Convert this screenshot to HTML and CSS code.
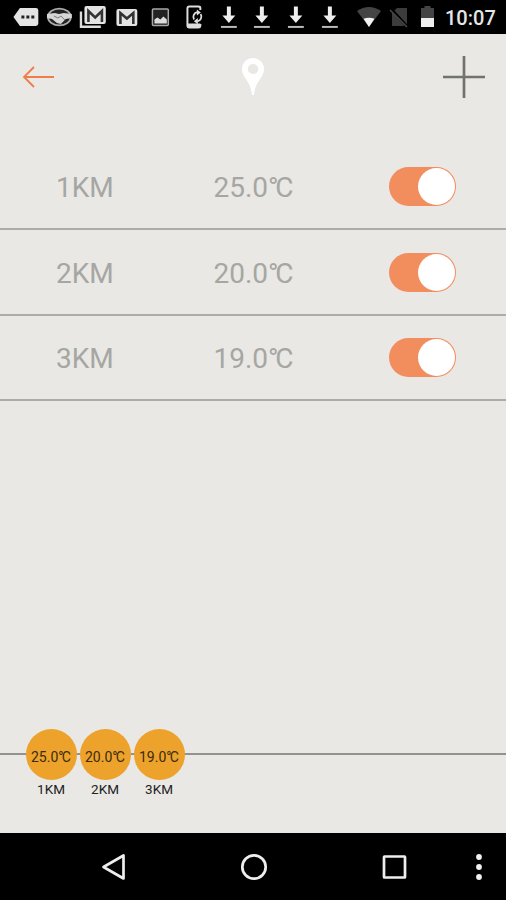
FILE: index.html
```
<!DOCTYPE html>
<html lang="en">
<head>
  <meta charset="UTF-8">
  <meta name="viewport" content="width=device-width, initial-scale=1.0">
  <title>Distance alerts</title>
  <link rel="stylesheet" href="styles.css">
</head>
<body>
  <!-- Status bar -->
  <div class="status-bar">
    <div class="notifications">
      <svg viewBox="0 0 34 34"><path d="M11 8h16q2.500 0 2.500 2.500v13q0 2.500-2.500 2.500H11L4.500 17z" fill="#e4e4e4"/><path d="M12.500 15.500h3v3h-3zM17.500 15.500h3v3h-3zM22.500 15.500h3v3h-3z" fill="#222"/></svg>
      <svg viewBox="0 0 34 34"><ellipse cx="16.500" cy="17" rx="11.500" ry="8.500" fill="#222" stroke="#aaa" stroke-width="1.800"/><path d="M4 14l8-1 4 1 5-1 8 1v4l-6 1-5 5-4-1-5-4-5-1z" fill="#d5d5d5"/><path d="M11 16l4 2 3-2 4 4" stroke="#777" fill="none"/></svg>
      <svg viewBox="0 0 34 34"><path d="M4 11.500v15.300h20" fill="none" stroke="#ddd" stroke-width="2.400"/><rect x="7.500" y="6" width="21.500" height="18" rx="2" fill="#e4e4e4"/><path d="M11.500 22V11l6.800 6.500 6.800-6.500v11" fill="none" stroke="#333" stroke-width="2.600"/></svg>
      <svg viewBox="0 0 34 34"><rect x="6.500" y="9" width="21" height="17" rx="2" fill="#e4e4e4"/><path d="M10.500 24V13l6.500 5.500 6.500-5.500v11" fill="none" stroke="#333" stroke-width="2.600"/></svg>
      <svg viewBox="0 0 34 34"><rect x="8.500" y="9" width="16" height="16.500" rx="1" fill="#222" stroke="#a8a8a8" stroke-width="1.500"/><path d="M10.500 23.500v-4l3-2 3 2 3-3 3.500 3v4z" fill="#ddd"/></svg>
      <svg viewBox="0 0 34 34"><path d="M22.500 10V8q0-1.500-2-1.500h-9q-2 0-2 2v17q0 2 2 2h9q2 0 2-2V24" fill="none" stroke="#ddd" stroke-width="2"/><path d="M9.500 23.500h13v3q0 1-1 1h-11q-1 0-1-1z" fill="#ddd"/><path d="M16.200 19.500a4.800 4.800 0 0 1 3.300-7.300M22.800 14a4.800 4.800 0 0 1-3.300 7.300" fill="none" stroke="#ddd" stroke-width="1.800"/><path d="M19 9.500l4 3-4 3zM20 18l-4 3.200 4 3z" fill="#ddd"/></svg>
      <svg viewBox="0 0 34 34"><path d="M15 6.500h4v9h4.500L17 23l-6.500-7.500H15z" fill="#eee"/><path d="M9 26h16v2H9z" fill="#bbb"/></svg>
      <svg viewBox="0 0 34 34"><path d="M15 6.500h4v9h4.500L17 23l-6.500-7.500H15z" fill="#eee"/><path d="M9 26h16v2H9z" fill="#bbb"/></svg>
      <svg viewBox="0 0 34 34"><path d="M15 6.500h4v9h4.500L17 23l-6.500-7.500H15z" fill="#eee"/><path d="M9 26h16v2H9z" fill="#bbb"/></svg>
      <svg viewBox="0 0 34 34"><path d="M15 6.500h4v9h4.500L17 23l-6.500-7.500H15z" fill="#eee"/><path d="M9 26h16v2H9z" fill="#bbb"/></svg>
    </div>
    <svg class="system" viewBox="0 0 84 34">
      <path d="M3 11Q15 3 27 11L15 27z" fill="#444"/>
      <path d="M9.500 18.800Q15 16.500 20.500 18.800L15 27z" fill="#f2f2f2"/>
      <path d="M43 8h10v18H38V13z" fill="#3c3c3c"/>
      <path d="M37 9l16.500 18" stroke="#000" stroke-width="3"/>
      <path d="M36 10l17 17" stroke="#4a4a4a" stroke-width="1.500"/>
      <path d="M67 8h3.500V6h6v2H80v11H67z" fill="#444"/>
      <path d="M67 18h13v9H67z" fill="#eee"/>
    </svg>
    <span class="clock">10:07</span>
  </div>
  <!-- End Status bar -->

  <div class="main">
    <div class="toolbar">
      <svg class="back" viewBox="0 0 34 24"><path d="M3 12h30M13 2L3 12l10 10" fill="none" stroke="#ee7d49" stroke-width="1.800"/></svg>
      <svg class="pin" viewBox="0 0 22 38"><path fill-rule="evenodd" d="M11 0a11 11 0 0 1 11 11C22 20 13 23 12 37h-2C9 23 0 20 0 11A11 11 0 0 1 11 0zm0 6a5.300 5 0 1 0 0 10 5.300 5 0 0 0 0-10z" fill="#fff"/></svg>
      <svg class="add" viewBox="0 0 42 42"><path d="M21 0v42M0 21h42" stroke="#727270" stroke-width="2.700"/></svg>
    </div>

    <ul class="alerts">
      <li class="alert">
        <span class="distance">1KM</span>
        <span class="temp">25.0<span class="degree">°</span>C</span>
        <span class="switch"><span class="knob"></span></span>
      </li>
      <li class="alert">
        <span class="distance">2KM</span>
        <span class="temp">20.0<span class="degree">°</span>C</span>
        <span class="switch"><span class="knob"></span></span>
      </li>
      <li class="alert">
        <span class="distance">3KM</span>
        <span class="temp">19.0<span class="degree">°</span>C</span>
        <span class="switch"><span class="knob"></span></span>
      </li>
    </ul>

    <div class="timeline">
      <div class="stop">
        <span class="bubble">25.0<span class="degree">°</span>C</span>
        <span class="label">1KM</span>
      </div>
      <div class="stop">
        <span class="bubble">20.0<span class="degree">°</span>C</span>
        <span class="label">2KM</span>
      </div>
      <div class="stop">
        <span class="bubble">19.0<span class="degree">°</span>C</span>
        <span class="label">3KM</span>
      </div>
    </div>
  </div>

  <!-- Navigation bar -->
  <div class="nav-bar">
    <svg class="nav-back" viewBox="0 0 26 28"><path d="M22.500 2.500v23L2.500 14z" fill="none" stroke="#eee" stroke-width="2.700" stroke-linejoin="round"/></svg>
    <svg class="nav-home" viewBox="0 0 28 28"><circle cx="14" cy="14" r="11.700" fill="none" stroke="#eee" stroke-width="2.700"/></svg>
    <svg class="nav-recent" viewBox="0 0 28 28"><rect x="4" y="3.500" width="21" height="21" rx="0.500" fill="none" stroke="#eee" stroke-width="2.700"/></svg>
    <svg class="nav-more" viewBox="0 0 8 28"><circle cx="4" cy="4" r="2.900" fill="#f2f2f2"/><circle cx="4" cy="14" r="2.900" fill="#f2f2f2"/><circle cx="4" cy="24" r="2.900" fill="#f2f2f2"/></svg>
  </div>
</body>
</html>
```
FILE: styles.css
```
body {
  font-family: Roboto, "Liberation Sans", sans-serif;
  background-color: #e9e8e4;
  margin: 0;
  height: 900px;
  display: flex;
  flex-direction: column;
  overflow: hidden;
}
svg {
  display: block;
  flex: none;
}

/* Status bar */
.status-bar {
  display: flex;
  align-items: center;
  height: 34px;
  padding-left: 9px;
  background-color: #000;
}
.notifications {
  display: flex;
}
.notifications svg {
  width: 33.75px;
  height: 34px;
}
.system {
  width: 84px;
  height: 34px;
  margin-left: 7.500px;
}
.clock {
  margin-left: 7px;
  padding-top: 2px;
  color: #e6e6e6;
  font-size: 20px;
  font-weight: 500;
  line-height: 34px;
}

.main {
  flex: 1;
  display: flex;
  flex-direction: column;
}

/* Toolbar */
.toolbar {
  display: flex;
  align-items: center;
  justify-content: space-between;
  height: 85px;
  padding: 0 21px;
  margin-bottom: 26px;
}
.back {
  width: 34px;
  height: 24px;
}
.pin {
  width: 22px;
  height: 38px;
  margin-left: 8px;
}
.add {
  width: 42px;
  height: 42px;
}

/* Alert list */
.alerts {
  list-style: none;
  margin: 0;
  padding: 0;
}
.alert {
  display: grid;
  grid-template-columns: repeat(3, 1fr);
  align-items: center;
  justify-items: center;
  box-sizing: border-box;
  height: 85.400px;
  border-bottom: 2px solid #acaca8;
  color: #a6a6a3;
  font-size: 28px;
}
.distance,
.temp {
  padding-top: 2px;
  padding-left: 1px;
}
.degree {
  letter-spacing: -0.120em;
}
.switch {
  display: flex;
  justify-content: flex-end;
  box-sizing: border-box;
  width: 67px;
  height: 39px;
  padding: 1px;
  margin-left: 1px;
  border-radius: 20px;
  background-color: #f28e5e;
}
.knob {
  width: 37px;
  height: 37px;
  border-radius: 50%;
  background-color: #fff;
}

/* Timeline */
.timeline {
  display: flex;
  gap: 3px;
  height: 104px;
  margin-top: auto;
  padding-left: 25.500px;
  background: linear-gradient(#92928f, #92928f) 0 24px / 100% 2px no-repeat;
}
.stop {
  display: flex;
  flex-direction: column;
  align-items: center;
  width: 51px;
  font-size: 13.500px;
  color: #222;
}
.bubble {
  width: 51px;
  height: 51px;
  border-radius: 50%;
  background-color: #eca22b;
  color: #3b2b10;
  font-size: 14px;
  line-height: 56px;
  text-align: center;
}
.label {
  line-height: 18px;
}

/* Navigation bar */
.nav-bar {
  display: flex;
  align-items: center;
  height: 67px;
  background-color: #000;
}
.nav-back {
  width: 26px;
  height: 28px;
  margin-left: 101px;
}
.nav-home {
  width: 28px;
  height: 28px;
  margin-left: 113px;
}
.nav-recent {
  width: 28px;
  height: 28px;
  margin-left: 112px;
}
.nav-more {
  width: 8px;
  height: 28px;
  margin-left: 67px;
}
```
